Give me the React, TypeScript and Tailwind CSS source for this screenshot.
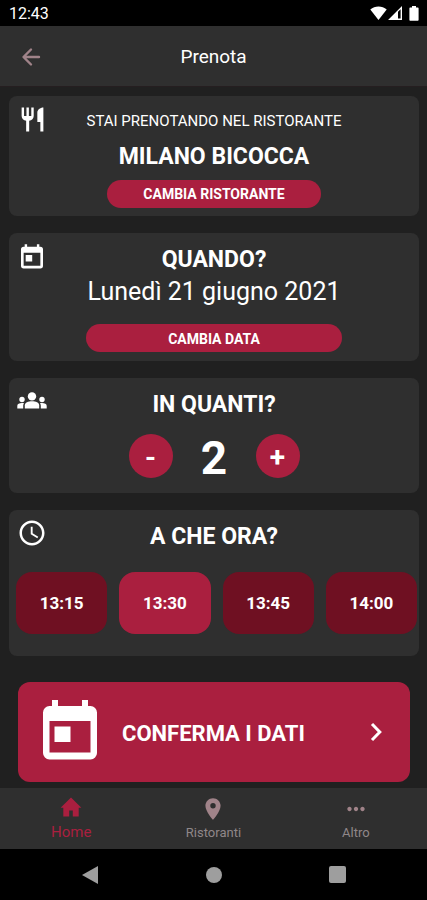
import React, { useState } from 'react'
import clsx from 'clsx'
import { MdAccessTime, MdMoreHoriz, MdPlace, MdRestaurant } from 'react-icons/md'

type IconProps = { className?: string }
type Icon = React.ComponentType<IconProps>

const CalendarIcon: Icon = ({ className }) => (
  <svg viewBox="0 0 54 60" className={className} fill="currentColor">
    <path
      fillRule="evenodd"
      d="M9 0h6v6h24V0h6v6h2.500a6.500 6.500 0 0 1 6.500 6.500V53a6.500 6.500 0 0 1-6.500 6.500h-41A6.500 6.500 0 0 1 0 53V12.500A6.500 6.500 0 0 1 6.500 6H9zM6.500 21v31.500h41V21zM11.500 26.500h16V42h-16z"
    />
  </svg>
)

const GroupIcon: Icon = ({ className }) => (
  <svg viewBox="0 0 30 30" className={className} fill="currentColor">
    <circle cx="15" cy="10.400" r="4.200" />
    <circle cx="5" cy="13.500" r="2.700" />
    <circle cx="25" cy="13.500" r="2.700" />
    <path d="M7.800 22.500v-3.200c0-2.600 3.400-4 7.200-4s7.200 1.400 7.200 4v3.200z" />
    <path d="M.3 22.500v-2.800c0-1.700 2-2.700 4.700-2.700.8 0 1.400.1 2 .3-.6.7-.8 1.500-.8 2.500v2.700zM29.700 22.500v-2.800c0-1.700-2-2.700-4.700-2.700-.8 0-1.400.1-2 .3.6.7.8 1.500.8 2.500v2.700z" />
  </svg>
)

const HomeIcon: Icon = ({ className }) => (
  <svg viewBox="0 0 26 26" className={className} fill="currentColor">
    <path d="M13 1.500 2.600 11.800h2.700v8.700h5.900v-6h3.600v6h5.900v-8.700h2.700z" />
  </svg>
)

const slots = ['13:15', '13:30', '13:45', '14:00']

const tabs: { label: string; icon: Icon }[] = [
  { label: 'Home', icon: HomeIcon },
  { label: 'Ristoranti', icon: MdPlace },
  { label: 'Altro', icon: MdMoreHoriz }
]

const StatusBar: React.FC = () => (
  <div className="flex h-[26px] items-center justify-between bg-black pl-[9px] pr-2 text-white">
    <span className="pt-0.5 text-base leading-6">12:43</span>
    <div className="flex items-center">
      <svg viewBox="0 0 17 14" className="h-3.5 w-[17px]" fill="currentColor">
        <path d="M8.500 14 0.300 3.600C2.600 1.500 5.400 0.500 8.500 0.500s5.900 1 8.200 3.100z" />
      </svg>
      <svg viewBox="0 0 14 14" className="ml-px h-3.5 w-3.5" fill="currentColor">
        <path fillRule="evenodd" d="M0 14 14 0v14zM10 5.800V12.600h2.600V3.200z" />
      </svg>
      <svg viewBox="0 0 10 15" className="ml-[7px] h-[15px] w-2.5" fill="currentColor">
        <path d="M3 0h4v1.500h1.600c.6 0 1 .4 1 1v11.300c0 .6-.4 1-1 1H1.400c-.6 0-1-.4-1-1V2.500c0-.6.4-1 1-1H3z" />
      </svg>
    </div>
  </div>
)

const Card: React.FC<{ icon: React.ReactNode; className?: string; children: React.ReactNode }> = ({
  icon,
  className = '',
  children
}) => (
  <section className={`relative flex flex-col items-center rounded-lg bg-[#2f2f2f] text-white ${className}`}>
    <div className="absolute left-2 top-2 flex size-[30px] items-center justify-center">{icon}</div>
    {children}
  </section>
)

const CardTitle: React.FC<{ children: React.ReactNode }> = ({ children }) => (
  <h2 className="text-[23px] font-bold leading-8">{children}</h2>
)

const App: React.FC = () => {
  const [guests, setGuests] = useState(2)
  const [slot, setSlot] = useState('13:30')
  const [tab, setTab] = useState('Home')

  return (
    <div className="flex min-h-screen flex-col bg-[#202020] font-['Roboto',sans-serif]">
      <StatusBar />

      <header className="grid h-[61px] grid-cols-[1fr_auto_1fr] items-center border-b border-[#251e20] bg-[#2f2f2f] px-5 pt-0.5">
        <button aria-label="Indietro" className="justify-self-start text-[#a08389]">
          <svg
            viewBox="0 0 24 24"
            className="size-6"
            fill="none"
            stroke="currentColor"
            strokeWidth="2.400"
            strokeLinecap="round"
            strokeLinejoin="round"
          >
            <path d="M19 12H4M11 4.500 3.500 12l7.500 7.500" />
          </svg>
        </button>
        <h1 className="text-[19px] leading-7 text-white">Prenota</h1>
      </header>

      <main className="flex flex-1 flex-col gap-[17px] pb-1.5 pl-[9px] pr-2 pt-[9px]">
        <Card icon={<MdRestaurant className="size-[29px]" />} className="pb-2 pt-[13px]">
          <p className="text-[15px] leading-6">STAI PRENOTANDO NEL RISTORANTE</p>
          <div className="mt-2">
            <CardTitle>MILANO BICOCCA</CardTitle>
          </div>
          <button className="mt-[7px] h-7 w-[52%] rounded-full bg-[#aa1f3f] text-sm font-bold">
            CAMBIA RISTORANTE
          </button>
        </Card>

        <Card icon={<CalendarIcon className="h-[25px] w-[22px]" />} className="pb-[9px] pt-[11px]">
          <CardTitle>QUANDO?</CardTitle>
          <p className="text-[25px] leading-8">Lunedì 21 giugno 2021</p>
          <button className="mt-4 h-7 w-5/8 rounded-full bg-[#aa1f3f] pt-0.5 text-sm font-bold">
            CAMBIA DATA
          </button>
        </Card>

        <Card icon={<GroupIcon className="size-[30px]" />} className="pb-[15px] pt-[11px]">
          <CardTitle>IN QUANTI?</CardTitle>
          <div className="mt-[13px] flex h-11 items-center">
            <button
              aria-label="Meno persone"
              onClick={() => setGuests(Math.max(1, guests - 1))}
              className="size-11 rounded-full bg-[#aa1f3f] pt-1 text-[28px] font-bold leading-none"
            >
              -
            </button>
            <span className="w-[83px] pt-1 text-center text-[46px] font-bold leading-11">{guests}</span>
            <button
              aria-label="Più persone"
              onClick={() => setGuests(guests + 1)}
              className="size-11 rounded-full bg-[#aa1f3f] pt-1 text-[28px] font-bold leading-none"
            >
              +
            </button>
          </div>
        </Card>

        <Card icon={<MdAccessTime className="size-[30px]" />} className="pb-[22px] pt-[11px]">
          <CardTitle>A CHE ORA?</CardTitle>
          <div className="mt-[19px] grid w-full grid-cols-4 gap-3 pl-[7px] pr-0.5">
            {slots.map((time) => (
              <button
                key={time}
                onClick={() => setSlot(time)}
                className={clsx(
                  'h-[62px] rounded-2xl pt-0.5 text-[17px] font-bold',
                  time === slot ? 'bg-[#aa1f3f]' : 'bg-[#6f1022]'
                )}
              >
                {time}
              </button>
            ))}
          </div>
        </Card>

        <button className="mx-[9px] mt-[9px] flex h-[100px] items-center rounded-xl bg-[#aa1f3f] pl-[25px] pr-7 text-white">
          <CalendarIcon className="mb-1 h-[60px] w-[54px]" />
          <span className="ml-[25px] flex-1 pt-0.5 text-left text-[22px] font-bold">CONFERMA I DATI</span>
          <svg viewBox="0 0 12 20" className="h-5 w-3" fill="none" stroke="currentColor" strokeWidth="3">
            <path d="M2 2l7.800 8L2 18" />
          </svg>
        </button>
      </main>

      <nav className="grid h-[61px] grid-cols-3 bg-[#2f2f2f]">
        {tabs.map(({ label, icon: Icon }) => (
          <button
            key={label}
            onClick={() => setTab(label)}
            className={clsx(
              'flex flex-col items-center pt-2',
              label === tab ? 'text-[#aa1f3f]' : 'text-[#a08389]'
            )}
          >
            <Icon className="size-[26px]" />
            <span className={clsx('leading-5', label === tab ? 'text-[15px]' : 'pt-px text-[13px] text-[#8f8789]')}>
              {label}
            </span>
          </button>
        ))}
      </nav>

      <div className="flex h-[51px] items-center justify-center gap-[107px] bg-black text-[#9e9e9e]">
        <button aria-label="Indietro">
          <svg viewBox="0 0 18 18" className="size-[18px]" fill="currentColor">
            <path d="M17 0v18L1 9z" />
          </svg>
        </button>
        <button aria-label="Schermata iniziale" className="size-4 rounded-full bg-[#9e9e9e]" />
        <button aria-label="App recenti" className="size-[17px] rounded-xs bg-[#9e9e9e]" />
      </div>
    </div>
  )
}

export default App
